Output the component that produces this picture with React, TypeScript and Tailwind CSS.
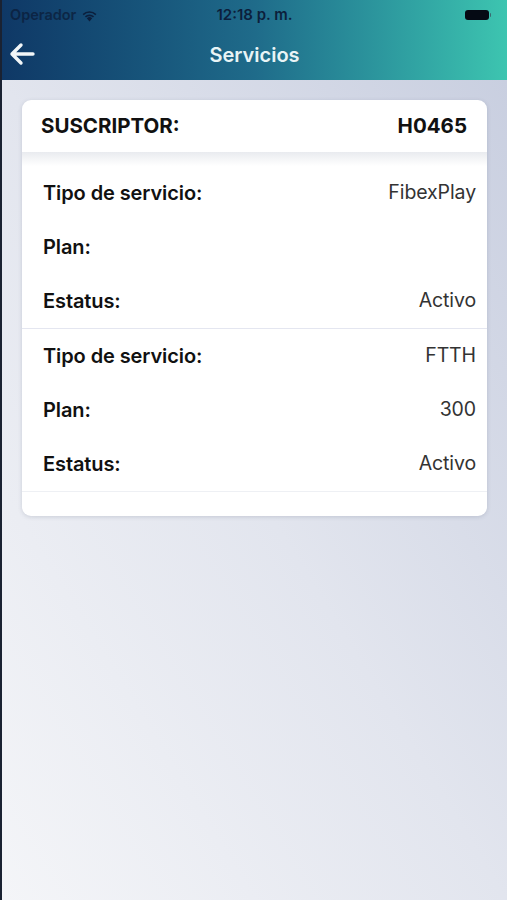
import React from "react";

function Row({ label, value }: { label: string; value: string }) {
  return (
    <div className="flex h-[54px] items-center justify-between pl-[21px] pr-[11px]">
      <span className="text-[20px] font-semibold tracking-[-0.1px] text-[#111]">{label}</span>
      <span className="text-[19.5px] tracking-[-0.1px] text-[#333]">{value}</span>
    </div>
  );
}

export default function App() {
  return (
    <div
      className="relative flex h-[900px] w-[507px] flex-col overflow-hidden border-l-2 border-[#1a2232]"
      style={{ fontFamily: 'Inter, "Liberation Sans", Arial, sans-serif' }}
    >
      {/* header */}
      <div className="bg-gradient-to-r from-[#0f3866] via-[#1f6b8a] to-[#3dc5b0]">
        <div className="relative flex h-[30px] items-center px-[8px] text-[#0c1f3c]">
          <span className="text-[14.5px] font-semibold opacity-80">Operador</span>
          <svg width="17" height="13" viewBox="0 0 17 13" className="ml-[5px]">
            <path d="M8.5 12.5 L5.8 9.3 A4 4 0 0 1 11.2 9.3 Z" fill="#0c1f3c" />
            <path d="M3.9 7.3 A6.8 6.8 0 0 1 13.1 7.3 L12 8.6 A5.1 5.1 0 0 0 5 8.6 Z" fill="#0c1f3c" />
            <path d="M1.6 4.9 A10 10 0 0 1 15.4 4.9 L14.3 6.2 A8.3 8.3 0 0 0 2.7 6.2 Z" fill="#0c1f3c" />
          </svg>
          <span className="absolute left-1/2 -translate-x-1/2 text-[15px] font-semibold">12:18 p. m.</span>
          <div className="ml-auto mr-[8px] flex items-center">
            <div className="h-[10px] w-[24px] rounded-[3px] bg-[#050a14]" />
            <div className="ml-[1px] h-[4px] w-[1.5px] rounded-r bg-[#3a6a70]" />
          </div>
        </div>
        <div className="relative flex h-[50px] items-center">
          <svg width="28" height="24" viewBox="0 0 28 24" className="ml-[6px] mb-[2px]">
            <path d="M25 12 H4 M13 3 L4 12 L13 21" fill="none" stroke="#f2f6f8" strokeWidth="3.4" strokeLinecap="round" strokeLinejoin="round" />
          </svg>
          <span className="absolute left-1/2 -translate-x-1/2 text-[20px] font-semibold text-[#e9f4f6]">Servicios</span>
        </div>
      </div>

      {/* body */}
      <div className="flex-1 bg-gradient-to-tr from-[#f4f5f8] via-[#e2e5ee] to-[#c9cfe0] px-[20px] pt-[20px]">
        <div className="overflow-hidden rounded-[9px] bg-white shadow-[0_1px_4px_rgba(60,70,100,0.18)]">
          <div className="flex h-[52px] items-center justify-between pl-[19px] pr-[20px]">
            <span className="text-[20.5px] font-bold text-[#111]">SUSCRIPTOR:</span>
            <span className="text-[20.5px] font-bold text-[#111]">H0465</span>
          </div>
          <div className="h-[14px] bg-gradient-to-b from-[#e9ebef] to-white" />
          <Row label="Tipo de servicio:" value="FibexPlay" />
          <Row label="Plan:" value="" />
          <Row label="Estatus:" value="Activo" />
          <div className="h-px bg-[#e4e6f0]" />
          <Row label="Tipo de servicio:" value="FTTH" />
          <Row label="Plan:" value="300" />
          <Row label="Estatus:" value="Activo" />
          <div className="h-px bg-[#eef0f4]" />
          <div className="h-[24px]" />
        </div>
      </div>
    </div>
  );
}
